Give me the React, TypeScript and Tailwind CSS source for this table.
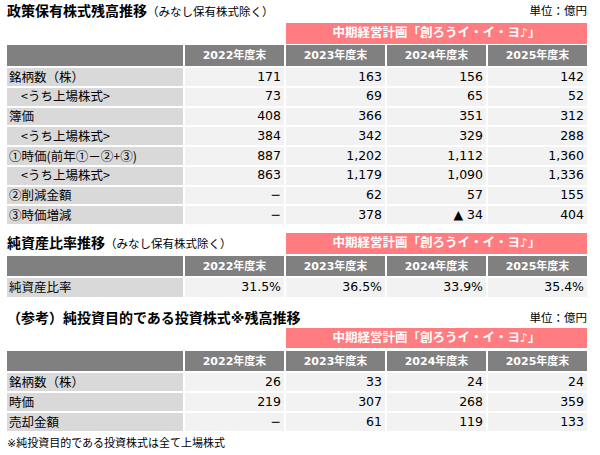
const FONT = "font-['DejaVu_Sans','Noto_Sans_CJK_JP',sans-serif]";
const JP = "font-['Noto_Sans_CJK_JP','DejaVu_Sans',sans-serif]";

type Row = { label: string; sub?: boolean; values: string[] };

const YEARS = ["2022年度末", "2023年度末", "2024年度末", "2025年度末"];

const holdings: Row[] = [
  { label: "銘柄数（株）", values: ["171", "163", "156", "142"] },
  { label: "<うち上場株式>", sub: true, values: ["73", "69", "65", "52"] },
  { label: "簿価", values: ["408", "366", "351", "312"] },
  { label: "<うち上場株式>", sub: true, values: ["384", "342", "329", "288"] },
  { label: "①時価(前年①－②+③)", values: ["887", "1,202", "1,112", "1,360"] },
  { label: "<うち上場株式>", sub: true, values: ["863", "1,179", "1,090", "1,336"] },
  { label: "②削減金額", values: ["−", "62", "57", "155"] },
  { label: "③時価増減", values: ["−", "378", "▲ 34", "404"] },
];

const ratio: Row[] = [{ label: "純資産比率", values: ["31.5%", "36.5%", "33.9%", "35.4%"] }];

const pure: Row[] = [
  { label: "銘柄数（株）", values: ["26", "33", "24", "24"] },
  { label: "時価", values: ["219", "307", "268", "359"] },
  { label: "売却金額", values: ["−", "61", "119", "133"] },
];

const GRID = "grid grid-cols-[176px_repeat(4,minmax(0,1fr))] gap-x-[2px]";

function PlanBar({ h }: { h: string }) {
  return (
    <div className={`col-start-3 col-span-3 ${h} bg-[#ff7c80] text-white font-bold text-[12.5px] flex items-center justify-center`}>
      中期経営計画「創ろうイ・イ・ヨ♪」
    </div>
  );
}

function Header({ h }: { h: string }) {
  return (
    <div className={GRID}>
      <div className={`${h} bg-[#808080]`} />
      {YEARS.map((y) => (
        <div key={y} className={`${h} bg-[#808080] text-white font-bold text-[11px] flex items-center justify-center`}>
          {y}
        </div>
      ))}
    </div>
  );
}

function Rows({ rows, h }: { rows: Row[]; h: string }) {
  return (
    <div className={`${GRID} gap-y-[2px] mt-[2px]`}>
      {rows.map((r, i) => (
        <div key={i} className="contents">
          <div className={`${h} ${JP} bg-[#d9d9d9] flex items-center whitespace-nowrap ${r.sub ? "pl-[14px]" : "pl-[2px]"}`}>
            {r.label}
          </div>
          {r.values.map((v, j) => (
            <div key={j} className={`${h} bg-[#f2f2f2] flex items-center justify-end pr-[3px]`}>
              {v}
            </div>
          ))}
        </div>
      ))}
    </div>
  );
}

function Title({ main, sub }: { main: string; sub?: string }) {
  return (
    <div className="whitespace-nowrap">
      <span className="text-[14px] font-bold">{main}</span>
      {sub && <span className="text-[11.5px]">{sub}</span>}
    </div>
  );
}

export default function App() {
  return (
    <div className={`w-[600px] h-[455px] bg-white text-black text-[12.5px] leading-none ${FONT}`}>
      <div className="w-[580px] ml-[7px]">
        {/* 政策保有株式 */}
        <div className="h-[23px] flex items-center justify-between">
          <Title main="政策保有株式残高推移" sub="（みなし保有株式除く）" />
          <span className="text-[11.5px]">単位：億円</span>
        </div>
        <div className={GRID}>
          <PlanBar h="h-[21px]" />
        </div>
        <div className="mt-[1px]">
          <Header h="h-[21px]" />
        </div>
        <Rows rows={holdings} h="h-[17.75px]" />

        {/* 純資産比率 */}
        <div className={`${GRID} mt-[9px]`}>
          <div className="col-span-2 flex items-center">
            <Title main="純資産比率推移" sub="（みなし保有株式除く）" />
          </div>
          <PlanBar h="h-[21px]" />
        </div>
        <div className="mt-[2px]">
          <Header h="h-[20px]" />
        </div>
        <Rows rows={ratio} h="h-[19px]" />

        {/* 純投資 */}
        <div className="mt-[12px] h-[19px] flex items-center justify-between">
          <Title main="（参考）純投資目的である投資株式※残高推移" />
          <span className="text-[11.5px]">単位：億円</span>
        </div>
        <div className={GRID}>
          <PlanBar h="h-[20px]" />
        </div>
        <div className="mt-[3px]">
          <Header h="h-[20px]" />
        </div>
        <Rows rows={pure} h="h-[18px]" />
        <div className="mt-[3px] h-[18px] flex items-center text-[11px]">※純投資目的である投資株式は全て上場株式</div>
      </div>
    </div>
  );
}
